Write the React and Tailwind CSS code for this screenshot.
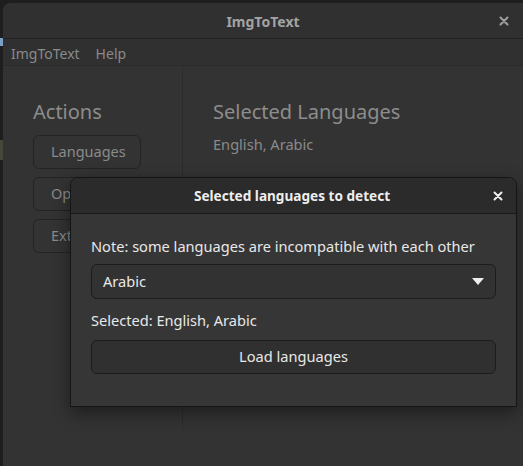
import React from 'react'

function CloseIcon({ className }) {
    return (
        <svg className={className} width="10" height="10" viewBox="0 0 10 10" fill="none">
            <path d="M1.5 1.5l7 7M8.5 1.5l-7 7" stroke="currentColor" strokeWidth="2" strokeLinecap="round" />
        </svg>
    )
}

function SideButton({ children }) {
    return (
        <div className="w-[108px] h-[34px] rounded-[6px] border border-[#232323] flex items-center pl-[17px] text-[14.5px] text-[#8a8a8a] overflow-hidden whitespace-nowrap">
            {children}
        </div>
    )
}

export default function App() {
    return (
        <div className="relative w-[523px] h-[466px] overflow-hidden bg-[#1e1e1e]" style={{ fontFamily: '"Noto Sans", "Open Sans", sans-serif' }}>
            {/* desktop bits peeking out on the left */}
            <div className="absolute left-0 top-[38px] w-[3px] h-[8px] bg-[#7aa0c8]" />
            <div className="absolute left-0 top-[140px] w-[3px] h-[20px] bg-[#45473a]" />

            <div className="absolute left-[3px] top-[3px] w-[530px] h-[470px] rounded-t-[8px] bg-[#333333] flex flex-col overflow-hidden">
                {/* title bar */}
                <div className="h-[36px] shrink-0 bg-[#303030] border-b border-[#222222] flex items-center justify-center relative">
                    <span className="text-[14px] font-bold text-[#a3a3a3] -ml-[10px] mt-[2px]">ImgToText</span>
                    <CloseIcon className="absolute left-[496px] top-[13px] text-[#a0a0a0]" />
                </div>
                {/* menu bar */}
                <div className="h-[27px] shrink-0 bg-[#303030] border-b border-[#2b2b2b] flex items-center gap-[16px] pl-[8px] pt-[2px] text-[14px] text-[#8a8a8a]">
                    <span>ImgToText</span>
                    <span>Help</span>
                </div>
                {/* content */}
                <div className="flex flex-1">
                    <div className="w-[180px] h-[364px] border-r border-[#2c2c2c] pl-[30px] pt-[32px]">
                        <div className="text-[20px] leading-[28px] text-[#8d8d8d]">Actions</div>
                        <div className="mt-[9px] flex flex-col gap-[8px]">
                            <SideButton>Languages</SideButton>
                            <SideButton>Open</SideButton>
                            <SideButton>Extract</SideButton>
                        </div>
                    </div>
                    <div className="pl-[30px] pt-[32px]">
                        <div className="text-[20px] leading-[28px] text-[#8d8d8d]">Selected Languages</div>
                        <div className="mt-[8px] text-[14.6px] text-[#8a8a8a]">English, Arabic</div>
                    </div>
                </div>
            </div>

            {/* dialog */}
            <div className="absolute left-[70px] top-[177px] w-[447px] h-[230px] rounded-t-[8px] border border-[#151515] bg-[#363636] shadow-[0_6px_18px_rgba(0,0,0,0.45)] flex flex-col overflow-hidden">
                <div className="h-[36px] shrink-0 bg-[#2b2b2b] border-b border-[#1a1a1a] flex items-center justify-center relative">
                    <span className="text-[13.6px] font-bold text-[#eeeeee] -ml-[3px] mt-[2px]">Selected languages to detect</span>
                    <CloseIcon className="absolute left-[422px] top-[13px] text-[#eeeeee]" />
                </div>
                <div className="px-[20px] pt-[22px] flex flex-col">
                    <div className="text-[14.6px] leading-[20px] text-[#e8e8e8]">Note: some languages are incompatible with each other</div>
                    <div className="mt-[8px] h-[35px] rounded-[6px] border border-[#1c1c1c] bg-[#323232] flex items-center justify-between pl-[11px] pr-[11px] text-[14.6px] text-[#e8e8e8]">
                        <span>Arabic</span>
                        <svg width="12" height="7" viewBox="0 0 12 7"><path d="M0 0h12L6 7z" fill="#eeeeee" /></svg>
                    </div>
                    <div className="mt-[11px] text-[14.6px] leading-[20px] text-[#e8e8e8]">Selected: English, Arabic</div>
                    <div className="mt-[10px] h-[34px] rounded-[6px] border border-[#1c1c1c] bg-[#303030] flex items-center justify-center text-[14.6px] text-[#e8e8e8]">
                        Load languages
                    </div>
                </div>
            </div>
        </div>
    )
}
